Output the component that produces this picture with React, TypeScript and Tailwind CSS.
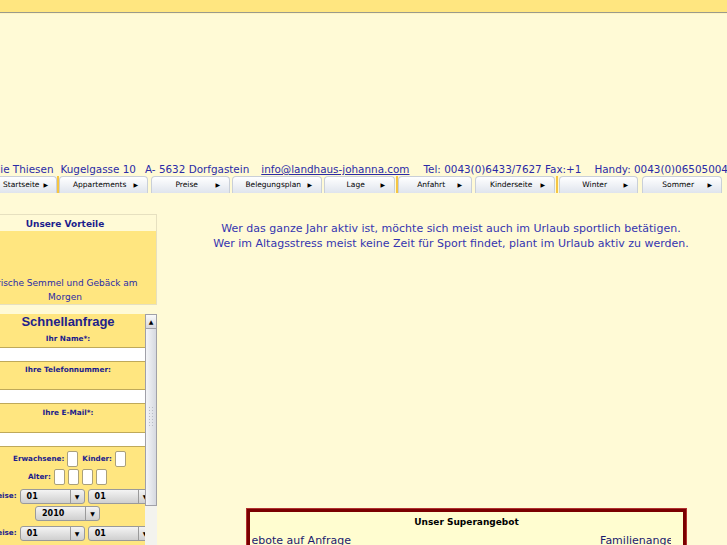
import React from 'react'

const tabs = [
  { label: 'Startseite', w: 'w-[65px]', gap: 'w-[2px]', sep: true },
  { label: 'Appartements', w: 'w-[89px]', gap: 'w-[3px]', sep: false },
  { label: 'Preise', w: 'w-[79px]', gap: 'w-[2px]', sep: false },
  { label: 'Belegungsplan', w: 'w-[90px]', gap: 'w-[2px]', sep: false },
  { label: 'Lage', w: 'w-[71px]', gap: 'w-[3px]', sep: true },
  { label: 'Anfahrt', w: 'w-[74px]', gap: 'w-[3px]', sep: false },
  { label: 'Kinderseite', w: 'w-[80px]', gap: 'w-[4px]', sep: true },
  { label: 'Winter', w: 'w-[79px]', gap: 'w-[4px]', sep: false },
  { label: 'Sommer', w: 'w-[80px]', gap: 'w-[4px]', sep: false },
]

const Tab = ({ label, w, gap, sep }: { label: string; w: string; gap: string; sep: boolean }) => {
  return (
    <div className="flex items-stretch shrink-0">
      <div className={`${w} h-[17px] flex items-center pl-[10px] pr-[9px] rounded-t-[4px] border border-b-0 border-[#c9cfd8] bg-gradient-to-b from-[#ffffff] to-[#dfe4ed]`}>
        <span className="flex-1 text-center text-[7.5px] text-black">{label}</span>
        <span className="ml-[4px] text-[6px] text-black leading-none">&#9654;</span>
      </div>
      <div className={`${gap} flex justify-center`}>
        {sep && <div className="w-[2px] h-full bg-[#f5c542]" />}
      </div>
    </div>
  )
}

const Select = ({ value, w }: { value: string; w: string }) => {
  return (
    <div className={`${w} h-[15px] flex items-stretch rounded-[3px] border border-[#9a9a9a] bg-gradient-to-b from-[#f4f4f4] to-[#cfcfcf] shrink-0`}>
      <span className="flex-1 pl-[6px] text-[8px] font-bold text-black leading-[13px]">{value}</span>
      <span className="w-[14px] border-l border-[#9a9a9a] flex items-center justify-center text-[6px] text-black">&#9660;</span>
    </div>
  )
}

const SmallBox = () => <div className="w-[11px] h-[16px] bg-white border border-[#aaa07a] rounded-[2px] shrink-0" />

const Label = ({ children }: { children: React.ReactNode }) => (
  <div className="text-center text-[7.3px] font-bold text-[#1c1c8c] leading-[10px]">{children}</div>
)

const Input = () => <div className="h-[15px] bg-white border-y border-[#bfa95a]" />

export default function App() {
  return (
    <div className="min-h-screen w-[727px] overflow-hidden bg-[#fffad6] font-['DejaVu_Sans',sans-serif]">
      <div className="h-[12px] bg-[#ffe680]" />
      <div className="h-[1px] bg-[#9a9a8c]" />
      <div className="h-[1px] bg-[#fff4c0]" />

      <div className="h-[148px]" />

      <div className="ml-[-27px] h-[14px] flex whitespace-nowrap text-[10.4px] leading-[14px] text-[#2b2ba6]">
        <span>Familie Thiesen</span>
        <span className="ml-[7px]">Kugelgasse 10</span>
        <span className="ml-[9px]">A- 5632 Dorfgastein</span>
        <span className="ml-[12px] underline">info@landhaus-johanna.com</span>
        <span className="ml-[14px]">Tel: 0043(0)6433/7627 Fax:+1</span>
        <span className="ml-[13px]">Handy: 0043(0)06505004</span>
      </div>

      <div className="ml-[-8px] flex whitespace-nowrap">
        {tabs.map((t) => (
          <Tab key={t.label} label={t.label} w={t.w} gap={t.gap} sep={t.sep} />
        ))}
      </div>

      <div className="flex">
        <div className="ml-[-27px] w-[184px] shrink-0 pt-[21px]">
          <div className="border border-[#e6e0c0]">
            <div className="h-[16px] pt-[1px] bg-[#fffad6] text-center text-[9px] font-bold leading-[16px] text-[#1c1c8c]">Unsere Vorteile</div>
            <div className="h-[73px] bg-[#ffe680] pt-[45px] text-center text-[9px] leading-[14px] text-[#2b2ba6]">
              Frische Semmel und Gebäck am
              <br />
              Morgen
            </div>
          </div>

          <div className="mt-[9px] ml-[18px] flex h-[240px]">
            <div className="w-[154px] bg-[#ffe680]">
              <div className="h-[19px] text-center font-['Liberation_Sans',sans-serif] text-[13px] font-bold leading-[16px] text-[#22228a]">Schnellanfrage</div>
              <div className="h-[14px] pt-[1px]">
                <Label>Ihr Name*:</Label>
              </div>
              <Input />
              <div className="h-[27px] pt-[3px]">
                <Label>Ihre Telefonnummer:</Label>
              </div>
              <Input />
              <div className="h-[28px] pt-[4px]">
                <Label>Ihre E-Mail*:</Label>
              </div>
              <Input />
              <div className="mt-[4px] flex items-center gap-[3px] pl-[22px]">
                <span className="text-[7.2px] font-bold text-[#1c1c8c]">Erwachsene:</span>
                <SmallBox />
                <span className="ml-[1px] text-[7.2px] font-bold text-[#1c1c8c]">Kinder:</span>
                <SmallBox />
              </div>
              <div className="mt-[2px] flex items-center gap-[3px] pl-[37px]">
                <span className="text-[7.2px] font-bold text-[#1c1c8c]">Alter:</span>
                <div className="flex gap-[3px]">
                  <SmallBox />
                  <SmallBox />
                  <SmallBox />
                  <SmallBox />
                </div>
              </div>
              <div className="mt-[4px] flex items-center gap-[3px] ml-[-8px]">
                <span className="text-[7.2px] font-bold text-[#1c1c8c]">Anreise:</span>
                <Select value="01" w="w-[65px]" />
                <Select value="01" w="w-[65px]" />
              </div>
              <div className="mt-[2px] flex pl-[44px]">
                <Select value="2010" w="w-[65px]" />
              </div>
              <div className="mt-[5px] flex items-center gap-[3px] ml-[-8px]">
                <span className="text-[7.2px] font-bold text-[#1c1c8c]">Abreise:</span>
                <Select value="01" w="w-[65px]" />
                <Select value="01" w="w-[65px]" />
              </div>
            </div>
            <div className="w-[12px] flex flex-col">
              <div className="h-[192px] flex flex-col border border-[#a0a0a8] bg-[#e4e6ec]">
                <div className="h-[14px] flex items-center justify-center border-b border-[#a0a0a8] bg-gradient-to-b from-[#fafafa] to-[#d8d8de] text-[6px] leading-none text-black">&#9650;</div>
                <div className="flex-1 bg-gradient-to-r from-[#f4f5f8] to-[#d6d9e0] flex flex-col items-center justify-center">
                  <div className="w-[6px] h-[22px] bg-[radial-gradient(#b8bcc6_1px,transparent_1px)] bg-[length:3px_3px]" />
                </div>
              </div>
              <div className="flex-1 bg-[#f3f3ee]" />
            </div>
          </div>
        </div>

        <div className="flex-1">
          <div className="pt-[28px] pl-[18px] text-center text-[11px] leading-[15px] text-[#3535b0]">
            Wer das ganze Jahr aktiv ist, möchte sich meist auch im Urlaub sportlich betätigen.
            <br />
            Wer im Altagsstress meist keine Zeit für Sport findet, plant im Urlaub aktiv zu werden.
          </div>

          <div className="ml-[90px] mt-[258px] w-[439px] border-[3px] border-[#7a0000] bg-[#fffdd0] shadow-[0_0_0_1px_#b03030]">
            <div className="pt-[4px] text-center text-[9px] font-bold leading-[12px] text-black">Unser Superangebot</div>
            <div className="mt-[6px] mr-[12px] ml-[2px] flex justify-between overflow-hidden whitespace-nowrap text-[11px] leading-[14px] text-[#1a1a6e]">
              <span className="ml-[-22px]">Angebote auf Anfrage</span>
              <span className="mr-[-27px]">Familienangebote</span>
            </div>
          </div>
        </div>
      </div>
    </div>
  )
}
